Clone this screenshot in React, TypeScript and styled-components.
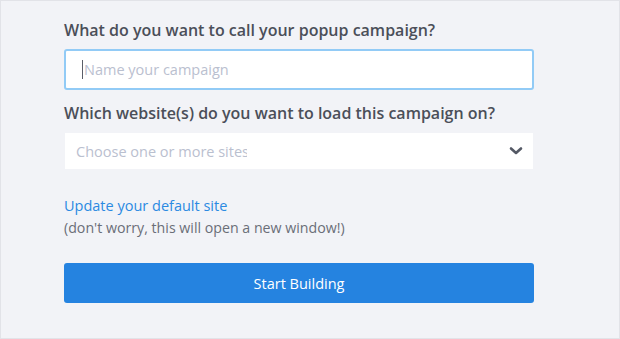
import React from "react"
import styled, { createGlobalStyle } from "styled-components"

const GlobalStyle = createGlobalStyle`
  html, body {
    margin: 0;
    padding: 0;
    background: #f2f3f7;
  }
  * {
    box-sizing: border-box;
  }
`

const Frame = styled.div`
  width: 620px;
  height: 339px;
  border: 1px solid #e2e3e8;
  background: #f2f3f7;
  padding: 19px 0 0 63px;
  font-family: "Open Sans", "Liberation Sans", sans-serif;
`

const Form = styled.div`
  width: 470px;
  display: flex;
  flex-direction: column;
`

const Label = styled.div<{ $gap: number }>`
  font-size: 16px;
  font-weight: 600;
  color: #4b4f59;
  line-height: 20px;
  margin-bottom: ${({ $gap }) => $gap}px;
`

const NameInput = styled.div`
  height: 41px;
  border: 2px solid #92cbf6;
  border-radius: 3px;
  background: #fff;
  display: flex;
  align-items: center;
  padding-left: 16px;
  margin-bottom: 13px;
`

const Caret = styled.span`
  width: 1px;
  height: 19px;
  background: #5a5e68;
  margin-right: 1px;
`

const Placeholder = styled.span<{ $width?: number }>`
  font-size: 14.5px;
  color: #bac0cf;
  white-space: nowrap;
  overflow: hidden;
  ${({ $width }) => ($width ? `width: ${$width}px;` : "")}
`

const Select = styled.div`
  height: 36px;
  margin: 0 1px 26px 1px;
  background: #fff;
  display: flex;
  align-items: center;
  justify-content: space-between;
  padding: 0 10px 0 11px;
`

const Link = styled.a`
  font-size: 14.5px;
  color: #2b8ae2;
  line-height: 22px;
  text-decoration: none;
`

const Note = styled.div`
  font-size: 14.2px;
  color: #6a6e77;
  line-height: 22px;
  margin-bottom: 24px;
`

const Button = styled.button`
  height: 40px;
  width: 100%;
  border: none;
  border-radius: 3px;
  background: #2583e0;
  color: #fff;
  font-family: inherit;
  font-size: 14.5px;
  font-weight: 500;
`

const Chevron = () => (
  <svg width="14" height="10" viewBox="0 0 14 10">
    <path d="M2 2.5 L7 7 L12 2.5" fill="none" stroke="#545965" strokeWidth="2.6" strokeLinecap="round" strokeLinejoin="round" />
  </svg>
)

export default function App() {
  return (
    <>
      <GlobalStyle />
      <Frame>
        <Form>
          <Label $gap={9}>What do you want to call your popup campaign?</Label>
          <NameInput>
            <Caret />
            <Placeholder>Name your campaign</Placeholder>
          </NameInput>
          <Label $gap={10}>Which website(s) do you want to load this campaign on?</Label>
          <Select>
            <Placeholder $width={171}>Choose one or more sites</Placeholder>
            <Chevron />
          </Select>
          <Link href="#">Update your default site</Link>
          <Note>(don't worry, this will open a new window!)</Note>
          <Button>Start Building</Button>
        </Form>
      </Frame>
    </>
  )
}
